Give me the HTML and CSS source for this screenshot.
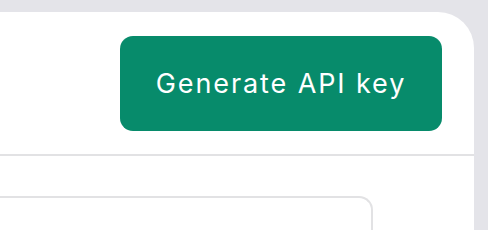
FILE: index.html
```html
<!DOCTYPE html>
<html>

<head>
    <meta charset="utf-8">
    <title>API keys</title>
    <link rel="stylesheet" href="styles.css">
</head>

<body>
    <div class="panel">
        <div class="header">
            <button class="gen-btn">Generate API key</button>
        </div>
        <div class="content">
            <div class="card"></div>
        </div>
    </div>
</body>

</html>
```

FILE: styles.css
```css
html,
body {
    margin: 0;
    width: 100%;
    height: 100%;
    overflow: hidden;
    font-family: Inter, "Liberation Sans", sans-serif;
    background-color: #e4e4e9;
}

.panel {
    margin-top: 12px;
    margin-left: -20px;
    width: 494px;
    height: 218px;
    background-color: #fff;
    border-top-right-radius: 36px;
}

.header {
    height: 144px;
    box-sizing: border-box;
    padding: 24px 32px 0 0;
    display: flex;
    justify-content: flex-end;
    border-bottom: solid 2px #e2e2e4;
}

.gen-btn {
    width: 322px;
    height: 95px;
    padding: 0;
    border: none;
    border-radius: 13px;
    background-color: #078b6b;
    color: #fff;
    font-family: Inter, "Liberation Sans", sans-serif;
    font-size: 27px;
    font-weight: 400;
    letter-spacing: 1.9px;
}

.content {
    padding: 40px 101px 0 0;
}

.card {
    height: 32px;
    border: solid 2px #e2e2e4;
    border-bottom: none;
    border-radius: 14px 14px 0 0;
}
```
